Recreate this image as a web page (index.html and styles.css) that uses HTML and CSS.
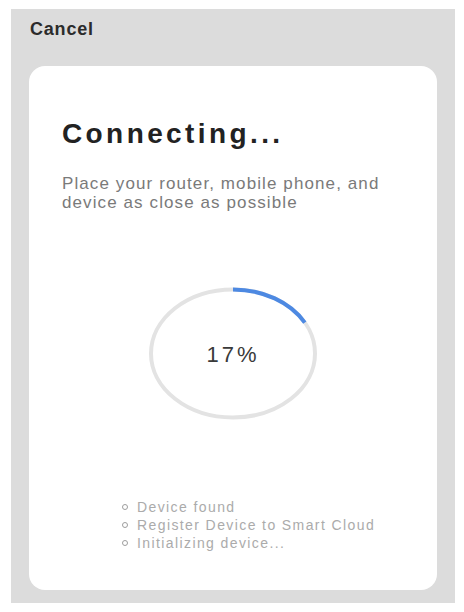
FILE: index.html
```html
<!DOCTYPE html>
<html lang="en">
<head>
    <meta charset="UTF-8">
    <meta name="viewport" content="width=device-width, initial-scale=1.0">
    <title>Connecting</title>
    <link rel="stylesheet" href="styles.css">
</head>
<body>
    <div class="screen">
        <div class="topbar">
            <span class="cancel">Cancel</span>
        </div>

        <div class="card">
            <h1 class="title">Connecting...</h1>
            <p class="hint">Place your router, mobile phone, and device as close as possible</p>

            <div class="progress">
                <svg class="ring" width="170" height="135" viewBox="0 0 170 135">
                    <ellipse cx="85" cy="67.5" rx="82" ry="64" fill="none" stroke="#e3e3e3" stroke-width="4"/>
                    <path d="M85 3.5 A82 64 0 0 1 156.8 36.7" fill="none" stroke="#4d89e2" stroke-width="4"/>
                </svg>
                <span class="percent">17%</span>
            </div>

            <ul class="steps">
                <li>Device found</li>
                <li>Register Device to Smart Cloud</li>
                <li>Initializing device...</li>
            </ul>
        </div>
    </div>
</body>
</html>
```

FILE: styles.css
```css
body {
    margin: 0;
    background: #fff;
    font-family: 'Liberation Sans', Arial, sans-serif;
}
.screen {
    margin: 9px 9px 0 11px;
    height: 594px;
    background: #dcdcdc;
    display: flex;
    flex-direction: column;
}
.topbar {
    height: 57px;
    padding-left: 19px;
}
.cancel {
    display: block;
    margin-top: 10px;
    font-size: 18px;
    font-weight: bold;
    letter-spacing: 0.8px;
    color: #2b2b2b;
}
.card {
    margin: 0 18px 0 18px;
    height: 524px;
    background: #fff;
    border-radius: 16px;
    padding: 52px 20px 0 33px;
    box-sizing: border-box;
}
.title {
    margin: 0;
    font-size: 28px;
    line-height: 32px;
    letter-spacing: 3.4px;
    color: #222;
}
.hint {
    margin: 24px 0 0 0;
    font-size: 17px;
    line-height: 19px;
    letter-spacing: 1.1px;
    color: #7a7a7a;
}
.progress {
    position: relative;
    width: 170px;
    height: 135px;
    margin: 74px 0 0 86px;
}
.ring {
    display: block;
}
.percent {
    position: absolute;
    left: 0;
    right: 0;
    top: 56px;
    text-align: center;
    font-size: 22px;
    letter-spacing: 3px;
    color: #3a3a3a;
}
.steps {
    list-style: none;
    margin: 77px 0 0 60px;
    padding: 0;
}
.steps li {
    display: flex;
    align-items: center;
    gap: 9px;
    font-size: 14px;
    line-height: 18px;
    letter-spacing: 1.4px;
    color: #ababab;
}
.steps li::before {
    content: "";
    width: 4px;
    height: 4px;
    border: 1px solid #9e9e9e;
    border-radius: 50%;
}
```
